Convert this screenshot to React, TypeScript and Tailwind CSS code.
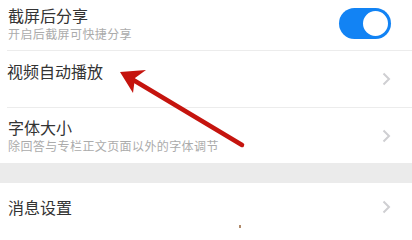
import React from 'react';

const font = { fontFamily: '"Noto Sans CJK SC", "Noto Sans", sans-serif' };

function Chevron() {
  return (
    <svg width="9" height="14" viewBox="0 0 9 14" className="shrink-0">
      <polyline points="1.5,1.5 7,7 1.5,12.5" fill="none" stroke="#cfcfd2" strokeWidth="2" />
    </svg>
  );
}

function Toggle() {
  return (
    <div className="relative h-[31px] w-[52px] rounded-full bg-[#1283f4]">
      <div className="absolute right-[1px] top-[1px] h-[29px] w-[29px] rounded-full border-[2px] border-[#1283f4] bg-white" />
    </div>
  );
}

function Texts({ title, sub }: { title: string; sub?: string }) {
  return (
    <div className="flex flex-col gap-[1px]">
      <div className="text-[16px] leading-[20px] text-[#333333]">{title}</div>
      <div className="h-[16px] text-[12px] leading-[16px] tracking-[0.4px] text-[#ababab]">{sub}</div>
    </div>
  );
}

export default function App() {
  return (
    <div className="relative h-[228px] w-[412px] overflow-hidden bg-white" style={font}>
      <div className="flex h-[50px] items-center justify-between pb-[3px] pl-[8px] pr-[21px]">
        <Texts title="截屏后分享" sub="开启后截屏可快捷分享" />
        <Toggle />
      </div>
      <div className="ml-[7px] h-px bg-[#ececec]" />
      <div className="flex h-[56px] items-center justify-between pl-[7px] pr-[21px]">
        <Texts title="视频自动播放" />
        <Chevron />
      </div>
      <div className="ml-[7px] h-px bg-[#ececec]" />
      <div className="flex h-[55px] items-center justify-between pl-[8px] pr-[21px]">
        <Texts title="字体大小" sub="除回答与专栏正文页面以外的字体调节" />
        <Chevron />
      </div>
      <div className="h-[20px] bg-[#ebebeb]" />
      <div className="flex h-[47px] items-center justify-between pl-[8px] pr-[21px]">
        <div className="text-[16px] leading-[20px] text-[#333333]">消息设置</div>
        <Chevron />
      </div>

      <svg className="pointer-events-none absolute left-0 top-0" width="412" height="228" viewBox="0 0 412 228">
        <line x1="242" y1="145" x2="130" y2="78" stroke="#c5140e" strokeWidth="4.5" strokeLinecap="round" />
        <polygon points="120,72 146,70 135,78 133,93" fill="#c5140e" />
      </svg>
      <div className="absolute left-[239px] top-[225px] h-[3px] w-[2px] bg-[#b08a6a]" />
    </div>
  );
}
